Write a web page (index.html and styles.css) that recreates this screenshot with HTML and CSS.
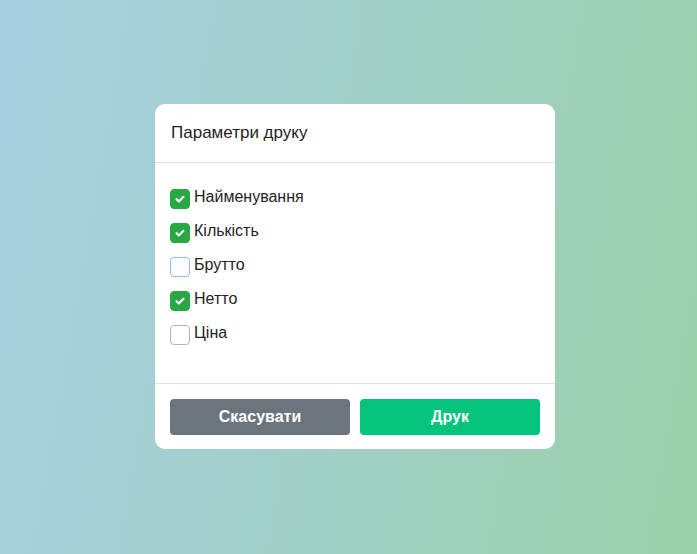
FILE: index.html
```html
<!DOCTYPE html>
<html lang="uk">
<head>
  <meta charset="UTF-8">
  <title>Параметри друку</title>
  <meta name="viewport" content="width=device-width, initial-scale=1.0">
  <link rel="stylesheet" href="styles.css">
</head>
<body>
  <div class="dialog">
    <div class="dialog-header">Параметри друку</div>
    <div class="dialog-body">
      <label class="option">
        <span class="box checked"><svg viewBox="0 0 20 20"><path d="M6.2 10.3l2.5 2.5 5.1-5.2" /></svg></span>
        <span class="option-text">Найменування</span>
      </label>
      <label class="option">
        <span class="box checked"><svg viewBox="0 0 20 20"><path d="M6.2 10.3l2.5 2.5 5.1-5.2" /></svg></span>
        <span class="option-text">Кількість</span>
      </label>
      <label class="option">
        <span class="box focused"></span>
        <span class="option-text">Брутто</span>
      </label>
      <label class="option">
        <span class="box checked"><svg viewBox="0 0 20 20"><path d="M6.2 10.3l2.5 2.5 5.1-5.2" /></svg></span>
        <span class="option-text">Нетто</span>
      </label>
      <label class="option">
        <span class="box"></span>
        <span class="option-text">Ціна</span>
      </label>
    </div>
    <div class="dialog-footer">
      <button class="btn btn-cancel">Скасувати</button>
      <button class="btn btn-print">Друк</button>
    </div>
  </div>
</body>
</html>
```

FILE: styles.css
```css
body {
  margin: 0;
  height: 554px;
  padding: 0 0 1px 13px;
  box-sizing: border-box;
  display: flex;
  justify-content: center;
  align-items: center;
  background: linear-gradient(100deg, #a9d0e2 0%, #a0cfc6 50%, #9bd0aa 100%);
  font-family: "Liberation Sans", Arial, sans-serif;
  color: #1f2326;
}
.dialog {
  width: 400px;
  background: #fff;
  border-radius: 10px;
  overflow: hidden;
}
.dialog-header {
  padding: 19px 16px;
  font-size: 17px;
  line-height: 20px;
  border-bottom: 1px solid #dee2e6;
}
.dialog-body {
  padding: 24px 15px 26px;
}
.option {
  display: flex;
  align-items: flex-start;
  height: 34px;
  cursor: pointer;
}
.box {
  width: 20px;
  height: 20px;
  margin-top: 2px;
  margin-right: 4px;
  box-sizing: border-box;
  border: 1px solid #adb5bd;
  border-radius: 4px;
  background: #fff;
  display: flex;
}
.box.focused {
  border-color: #8fb8ec;
}
.box.checked {
  background: #28a745;
  border-color: #28a745;
}
.box svg {
  width: 18px;
  height: 18px;
}
.box path {
  fill: none;
  stroke: #fff;
  stroke-width: 2.4;
  stroke-linecap: round;
  stroke-linejoin: round;
}
.option-text {
  font-size: 16px;
  line-height: 20px;
}
.dialog-footer {
  display: flex;
  gap: 10px;
  padding: 15px 15px 14px;
  border-top: 1px solid #dee2e6;
}
.btn {
  flex: 1;
  height: 36px;
  border: none;
  border-radius: 4px;
  color: #fff;
  font-family: "Liberation Sans", Arial, sans-serif;
  font-size: 16px;
  font-weight: bold;
  cursor: pointer;
}
.btn-cancel {
  background: #6c757d;
}
.btn-print {
  background: #03c37d;
}
```
